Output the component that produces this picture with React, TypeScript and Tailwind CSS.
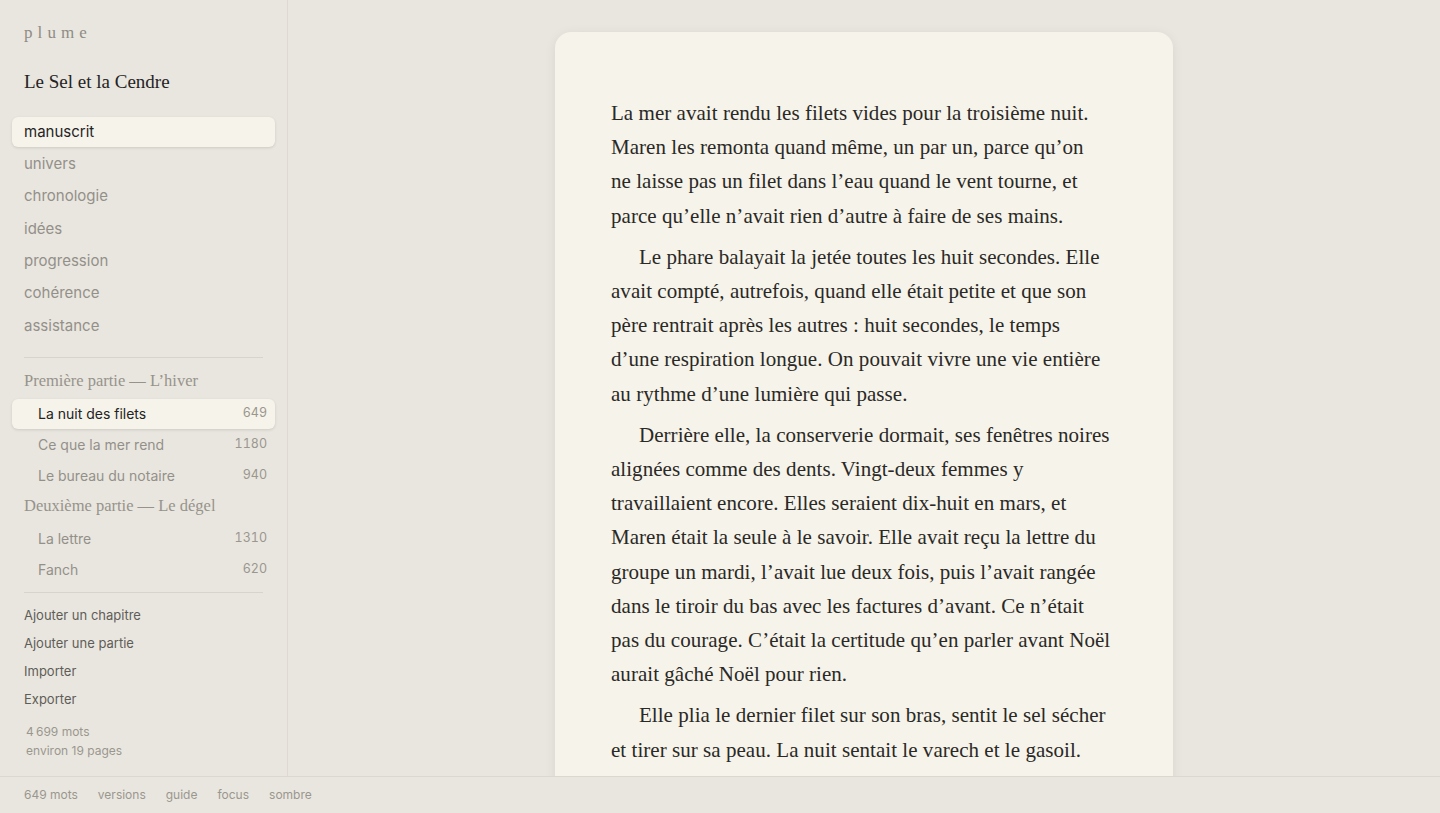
import React from "react";

const sections = ["manuscrit", "univers", "chronologie", "idées", "progression", "cohérence", "assistance"];

type Chapter = { title: string; words: number };
type Part = { title: string; chapters: Chapter[] };

const parts: Part[] = [
  {
    title: "Première partie — L’hiver",
    chapters: [
      { title: "La nuit des filets", words: 649 },
      { title: "Ce que la mer rend", words: 1180 },
      { title: "Le bureau du notaire", words: 940 },
    ],
  },
  {
    title: "Deuxième partie — Le dégel",
    chapters: [
      { title: "La lettre", words: 1310 },
      { title: "Fanch", words: 620 },
    ],
  },
];

// lignes telles qu'elles tombent dans la page
const paragraphs: string[][] = [
  [
    "La mer avait rendu les filets vides pour la troisième nuit.",
    "Maren les remonta quand même, un par un, parce qu’on",
    "ne laisse pas un filet dans l’eau quand le vent tourne, et",
    "parce qu’elle n’avait rien d’autre à faire de ses mains.",
  ],
  [
    "Le phare balayait la jetée toutes les huit secondes. Elle",
    "avait compté, autrefois, quand elle était petite et que son",
    "père rentrait après les autres : huit secondes, le temps",
    "d’une respiration longue. On pouvait vivre une vie entière",
    "au rythme d’une lumière qui passe.",
  ],
  [
    "Derrière elle, la conserverie dormait, ses fenêtres noires",
    "alignées comme des dents. Vingt-deux femmes y",
    "travaillaient encore. Elles seraient dix-huit en mars, et",
    "Maren était la seule à le savoir. Elle avait reçu la lettre du",
    "groupe un mardi, l’avait lue deux fois, puis l’avait rangée",
    "dans le tiroir du bas avec les factures d’avant. Ce n’était",
    "pas du courage. C’était la certitude qu’en parler avant Noël",
    "aurait gâché Noël pour rien.",
  ],
  [
    "Elle plia le dernier filet sur son bras, sentit le sel sécher",
    "et tirer sur sa peau. La nuit sentait le varech et le gasoil.",
  ],
  ["À l’ouest, les lumières de l’île clignaient au ras de l’eau."],
];

const sans = "font-['Inter','Noto_Sans',sans-serif]";
const serif = "font-['Liberation_Serif','DejaVu_Serif',serif]";

export default function App() {
  return (
    <div className={`h-screen flex flex-col bg-[#e9e6df] text-[#2b2a27] ${sans} overflow-hidden`}>
      <div className="flex flex-1 min-h-0">
        <aside className="w-[288px] shrink-0 border-r border-[#dedad2] flex flex-col px-3 pt-[22px]">
          <div className={`${serif} px-3 text-[17px] tracking-[0.3em] text-[#8f8c85] leading-[22px]`}>plume</div>
          <h1 className={`${serif} px-3 mt-[26px] text-[19px] leading-[24px] text-[#24231f]`}>Le Sel et la Cendre</h1>

          <nav className="mt-[23px] flex flex-col gap-[2.3px]">
            {sections.map((s, i) => (
              <div
                key={s}
                className={`h-[30px] flex items-center px-3 rounded-md text-[15px] ${
                  i === 0
                    ? "bg-[#f6f3ea] text-[#24231f] shadow-[0_1px_3px_rgba(0,0,0,0.12)]"
                    : "text-[#93908a]"
                }`}
              >
                {s}
              </div>
            ))}
          </nav>

          <div className="mx-3 mt-4 border-t border-[#d8d4cc]" />

          <div className="mt-[11px] flex flex-col">
            {parts.map((p, pi) => (
              <div key={p.title} className="flex flex-col">
                <div className={`${serif} px-3 h-[26px] flex items-center text-[16.5px] text-[#96938c] ${pi > 0 ? "mt-[3px]" : ""}`}>
                  {p.title}
                </div>
                <div className="flex flex-col gap-[1px] mt-[4px]">
                  {p.chapters.map((c) => {
                    const active = c.title === "La nuit des filets";
                    return (
                      <div
                        key={c.title}
                        className={`h-[30px] flex items-center justify-between pl-[26px] pr-2 rounded-md text-[14px] ${
                          active
                            ? "bg-[#f6f3ea] text-[#24231f] shadow-[0_1px_3px_rgba(0,0,0,0.12)]"
                            : "text-[#93908a]"
                        }`}
                      >
                        <span>{c.title}</span>
                        <span className="text-[12.5px] text-[#9a978f] tabular-nums">{c.words}</span>
                      </div>
                    );
                  })}
                </div>
              </div>
            ))}
          </div>

          <div className="mx-3 mt-[7px] border-t border-[#d8d4cc]" />

          <div className="mt-[9px] flex flex-col px-3 text-[13px] text-[#5f5d58]">
            {["Ajouter un chapitre", "Ajouter une partie", "Importer", "Exporter"].map((a) => (
              <div key={a} className="h-[28px] flex items-center">{a}</div>
            ))}
          </div>

          <div className="mt-[8px] px-[14px] text-[12px] leading-[19px] text-[#9a978f]">
            <div>4{"\u202f"}699 mots</div>
            <div>environ 19 pages</div>
          </div>
        </aside>

        <main className="flex-1 min-w-0 overflow-hidden flex justify-center pt-8">
          <article className="w-[618px] shrink-0 self-start bg-[#f6f3ea] rounded-[16px] shadow-[0_2px_12px_rgba(0,0,0,0.07)] pl-14 pr-10 pt-16 pb-16">
            <div className={`${serif} text-[21px] tracking-[0.04px] leading-[34.2px] text-[#2a2926]`}>
              {paragraphs.map((lines, i) => (
                <p key={i} className={i === 0 ? "" : "mt-[7px]"}>
                  {lines.map((l, j) => (
                    <span key={j} className={`block whitespace-nowrap ${i > 0 && j === 0 ? "pl-7" : ""}`}>
                      {l}
                    </span>
                  ))}
                </p>
              ))}
            </div>
          </article>
        </main>
      </div>

      <footer className="h-[37px] shrink-0 border-t border-[#dcd8d0] bg-[#e9e6df] flex items-center gap-5 px-6 text-[12px] text-[#9a978f]">
        <span>649 mots</span>
        <span>versions</span>
        <span>guide</span>
        <span>focus</span>
        <span>sombre</span>
      </footer>
    </div>
  );
}
